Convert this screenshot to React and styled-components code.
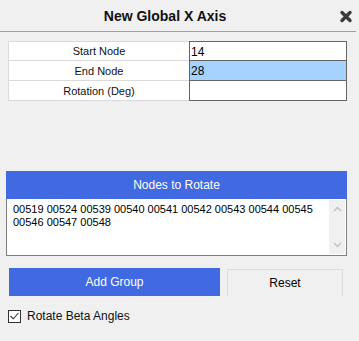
import React, { useState } from 'react';
import styled, { createGlobalStyle } from 'styled-components';

const GlobalStyle = createGlobalStyle`
  html, body {
    margin: 0;
    padding: 0;
    background: #f0f0f0;
  }
  body {
    font-family: 'Liberation Sans', Arial, sans-serif;
    color: #000;
  }
`;

const Dialog = styled.div`
  width: 359px;
  height: 341px;
  background: #f0f0f0;
  display: flex;
  flex-direction: column;
`;

const Header = styled.div`
  height: 31px;
  border-bottom: 1px solid #a0a0a0;
  margin-right: 3px;
  display: flex;
  align-items: center;
  justify-content: center;
  position: relative;
`;

const Title = styled.h1`
  margin: 0 0 0 -26px;
  font-size: 14px;
  font-weight: bold;
  color: #111;
`;

const CloseButton = styled.button`
  position: absolute;
  right: 2px;
  top: 9px;
  width: 16px;
  height: 16px;
  padding: 0;
  border: none;
  background: none;
  cursor: pointer;
  display: flex;
`;

const Body = styled.div`
  padding: 9px 12px 0 6px;
  display: flex;
  flex-direction: column;
`;

const Grid = styled.div`
  margin-left: 2px;
  display: grid;
  grid-template-columns: 181px 158px;
  grid-auto-rows: 20px;
`;

const Label = styled.div`
  background: #fff;
  border: 1px solid #dadada;
  border-top-width: ${p => (p.$first ? '1px' : '0')};
  border-right: none;
  display: flex;
  align-items: center;
  justify-content: center;
  font-size: 11px;
  color: #111;
`;

const Value = styled.div`
  background: ${p => (p.$selected ? '#a6d2ff' : '#fff')};
  border: 1px solid #646464;
  border-top-width: ${p => (p.$first ? '1px' : '0')};
  display: flex;
  align-items: flex-start;
  padding: 3px 1px 0;
  font-size: 12px;
`;

const SectionHeader = styled.div`
  margin-top: 70px;
  height: 28px;
  background: #4169e1;
  color: #fff;
  font-size: 12px;
  display: flex;
  align-items: center;
  justify-content: center;
`;

const ListBox = styled.div`
  height: 56px;
  background: #fff;
  border: 1px solid #808080;
  border-top: none;
  display: flex;
`;

const ListText = styled.div`
  flex: 1;
  padding: 4px 6px;
  font-size: 11px;
  line-height: 13px;
`;

const ScrollBar = styled.div`
  width: 16px;
  margin: 1px 1px 1px 0;
  background: #f0f0f0;
  display: flex;
  flex-direction: column;
  justify-content: space-between;
  align-items: center;
  padding: 6px 0;
`;

const ButtonRow = styled.div`
  margin-top: 12px;
  display: flex;
  align-items: flex-start;
  gap: 7px;
  padding-left: 3px;
`;

const PrimaryButton = styled.button`
  width: 211px;
  height: 28px;
  border: none;
  background: #4169e1;
  color: #fff;
  font-family: inherit;
  font-size: 12px;
  cursor: pointer;
`;

const SecondaryButton = styled.button`
  margin-top: 1px;
  width: 116px;
  height: 27px;
  border: 1px solid #dcdcdc;
  border-bottom: none;
  background: #f0f0f0;
  color: #000;
  font-family: inherit;
  font-size: 12px;
  cursor: pointer;
`;

const CheckRow = styled.label`
  margin-top: 13px;
  margin-left: 2px;
  display: flex;
  align-items: center;
  gap: 6px;
  font-size: 12px;
  color: #111;
  cursor: pointer;
`;

const Box = styled.span`
  width: 11px;
  height: 11px;
  border: 1px solid #333;
  background: #fff;
  display: flex;
  align-items: center;
  justify-content: center;
`;

const Arrow = ({ up }) => (
  <svg width="9" height="6" viewBox="0 0 9 6">
    <path
      d={up ? 'M1 5 L4.5 1.5 L8 5' : 'M1 1 L4.5 4.5 L8 1'}
      fill="none"
      stroke="#c2c2c2"
      strokeWidth="1.5"
    />
  </svg>
);

const rows = [
  { label: 'Start Node', value: '14' },
  { label: 'End Node', value: '28', selected: true },
  { label: 'Rotation (Deg)', value: '' },
];

const App = () => {
  const [beta, setBeta] = useState(true);

  return (
    <>
      <GlobalStyle />
      <Dialog>
        <Header>
          <Title>New Global X Axis</Title>
          <CloseButton aria-label="Close">
            <svg width="16" height="15" viewBox="0 0 16 15">
              <path d="M4 3.5 L12 11.5 M12 3.5 L4 11.5" stroke="#3a3a3a" strokeWidth="3.4" strokeLinecap="round" />
            </svg>
          </CloseButton>
        </Header>
        <Body>
          <Grid>
            {rows.map((r, i) => (
              <React.Fragment key={r.label}>
                <Label $first={i === 0}>{r.label}</Label>
                <Value $first={i === 0} $selected={r.selected}>{r.value}</Value>
              </React.Fragment>
            ))}
          </Grid>

          <SectionHeader>Nodes to Rotate</SectionHeader>
          <ListBox>
            <ListText>
              00519 00524 00539 00540 00541 00542 00543 00544 00545 00546 00547 00548
            </ListText>
            <ScrollBar>
              <Arrow up />
              <Arrow />
            </ScrollBar>
          </ListBox>

          <ButtonRow>
            <PrimaryButton>Add Group</PrimaryButton>
            <SecondaryButton>Reset</SecondaryButton>
          </ButtonRow>

          <CheckRow onClick={() => setBeta(!beta)}>
            <Box>
              {beta && (
                <svg width="9" height="8" viewBox="0 0 9 8">
                  <path d="M0.5 4 L3.3 6.8 L8.5 1" fill="none" stroke="#333" strokeWidth="1.1" />
                </svg>
              )}
            </Box>
            Rotate Beta Angles
          </CheckRow>
        </Body>
      </Dialog>
    </>
  );
};

export default App;
